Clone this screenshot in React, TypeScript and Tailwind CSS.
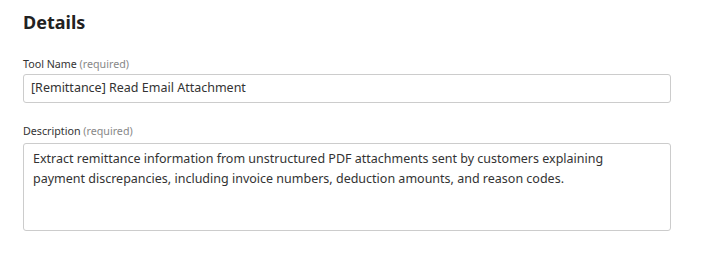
export default function App() {
  return (
    <div className="w-[706px] h-[260px] bg-white pl-[23px] pr-[35px] pt-[10px]" style={{ fontFamily: '"Noto Sans", "Open Sans", sans-serif' }}>
      <h2 className="text-[18px] font-bold text-[#222] leading-[24px]">Details</h2>
      <div className="mt-[22px]">
        <div className="text-[10.7px] leading-[16px] text-[#333]">
          Tool Name <span className="text-[#888]">(required)</span>
        </div>
        <div className="mt-[2px] h-[29px] border border-[#cccccc] rounded-[3px] px-[7px] flex items-center text-[12.5px] text-[#333]">
          [Remittance] Read Email Attachment
        </div>
      </div>
      <div className="mt-[20px]">
        <div className="text-[10.7px] leading-[16px] text-[#333]">
          Description <span className="text-[#888]">(required)</span>
        </div>
        <div className="mt-[4px] h-[88px] border border-[#cccccc] rounded-[3px] pl-[9px] pr-[40px] py-[5px] text-[12.5px] leading-[19.5px] text-[#333]">
          Extract remittance information from unstructured PDF attachments sent by customers explaining payment discrepancies, including invoice numbers, deduction amounts, and reason codes.
        </div>
      </div>
    </div>
  );
}
